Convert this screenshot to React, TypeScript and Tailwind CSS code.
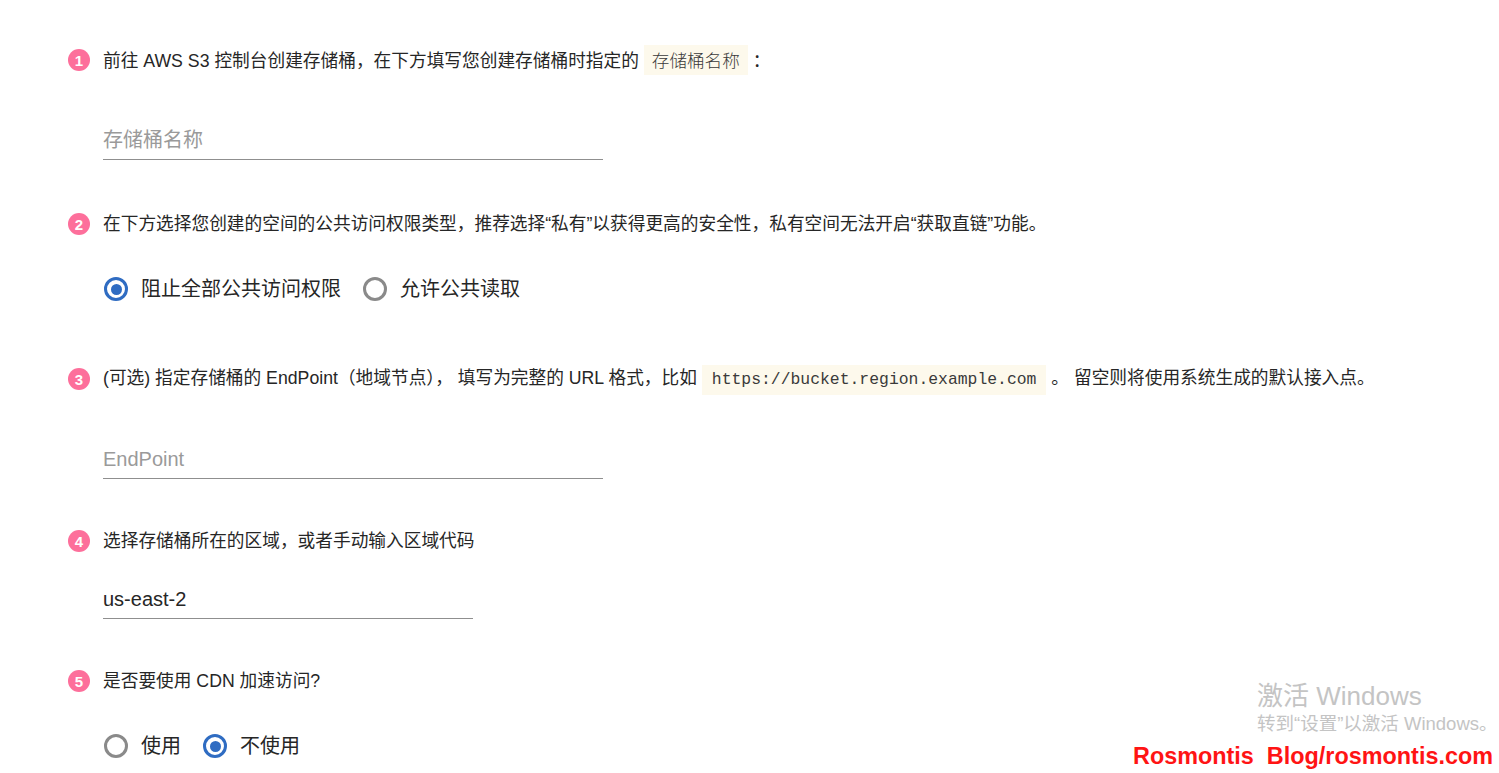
import React from "react";

const Step = ({ n, children }: { n: number; children: React.ReactNode }) => (
  <div className="flex items-center h-[30px]">
    <div className="w-[22px] h-[22px] rounded-full bg-[#fd6f9b] text-white flex items-center justify-center text-[15px] font-bold shrink-0 leading-none">
      {n}
    </div>
    <div className="ml-[13px] text-[17.7px] text-[#262626] whitespace-nowrap leading-[30px]">{children}</div>
  </div>
);

const Code = ({ children, cjk }: { children: React.ReactNode; cjk?: boolean }) => (
  <span
    className={
      "inline-block bg-[#fdf9ec] leading-[30px] text-[#3a3a3a] " +
      (cjk ? "px-2 text-[17.6px] font-light" : "px-[10px] text-[16.4px]")
    }
    style={{ fontFamily: cjk ? '"Noto Sans CJK SC", sans-serif' : '"Liberation Mono", "DejaVu Sans Mono", monospace' }}
  >
    {children}
  </span>
);

const Input = ({ value, placeholder, w }: { value?: string; placeholder?: string; w: string }) => (
  <div className={"ml-[35px] h-[40px] border-b border-[#8f8f8f] flex items-center text-[20px] " + w}>
    {value ? (
      <span className="text-[#262626]">{value}</span>
    ) : (
      <span className="text-[#9a9a9a]">{placeholder}</span>
    )}
  </div>
);

const Radio = ({ checked, label }: { checked?: boolean; label: string }) => (
  <div className="flex items-center">
    <div
      className={
        "w-[24px] h-[24px] rounded-full border-[3px] flex items-center justify-center shrink-0 " +
        (checked ? "border-[#2f6cc2]" : "border-[#8a8a8a]")
      }
    >
      {checked && <div className="w-[11px] h-[11px] rounded-full bg-[#2f6cc2]" />}
    </div>
    <span className="ml-[13px] text-[20px] text-[#262626]">{label}</span>
  </div>
);

export default function App() {
  return (
    <div
      className="relative w-[1499px] h-[773px] bg-white overflow-hidden"
      style={{ fontFamily: '"Liberation Sans", Arial, "Noto Sans CJK SC", sans-serif' }}
    >
      <div className="pl-[68px] pt-[45px] flex flex-col">
        <Step n={1}>
          前往 AWS S3 控制台创建存储桶，在下方填写您创建存储桶时指定的 <Code cjk>存储桶名称</Code> ：
        </Step>
        <div className="mt-[45px]">
          <Input placeholder="存储桶名称" w="w-[500px]" />
        </div>

        <div className="mt-[49px]">
          <Step n={2}>
            在下方选择您创建的空间的公共访问权限类型，推荐选择“私有”以获得更高的安全性，私有空间无法开启“获取直链”功能。
          </Step>
        </div>
        <div className="mt-[35px] ml-[36px] h-[30px] flex items-center gap-[22px]">
          <Radio checked label="阻止全部公共访问权限" />
          <Radio label="允许公共读取" />
        </div>

        <div className="mt-[60px]">
          <Step n={3}>
            (可选) 指定存储桶的 EndPoint（地域节点）， 填写为完整的 URL 格式，比如{" "}
            <Code>https://bucket.region.example.com</Code> 。 留空则将使用系统生成的默认接入点。
          </Step>
        </div>
        <div className="mt-[45px]">
          <Input placeholder="EndPoint" w="w-[500px]" />
        </div>

        <div className="mt-[47px]">
          <Step n={4}>选择存储桶所在的区域，或者手动输入区域代码</Step>
        </div>
        <div className="mt-[23px]">
          <Input value="us-east-2" w="w-[370px]" />
        </div>

        <div className="mt-[47px]">
          <Step n={5}>是否要使用 CDN 加速访问?</Step>
        </div>
        <div className="mt-[35px] ml-[36px] h-[30px] flex items-center gap-[22px]">
          <Radio label="使用" />
          <Radio checked label="不使用" />
        </div>
      </div>

      <div className="absolute left-[1257px] top-[683px] text-[#c4c4c4] leading-none">
        <div className="text-[26px]">激活 Windows</div>
        <div className="text-[18.5px] mt-[6px]">转到“设置”以激活 Windows。</div>
      </div>
      <div className="absolute right-[6px] top-[742px] text-[#ff1414] text-[23.4px] font-bold leading-[28px] whitespace-pre">
        Rosmontis  Blog/rosmontis.com
      </div>
    </div>
  );
}
